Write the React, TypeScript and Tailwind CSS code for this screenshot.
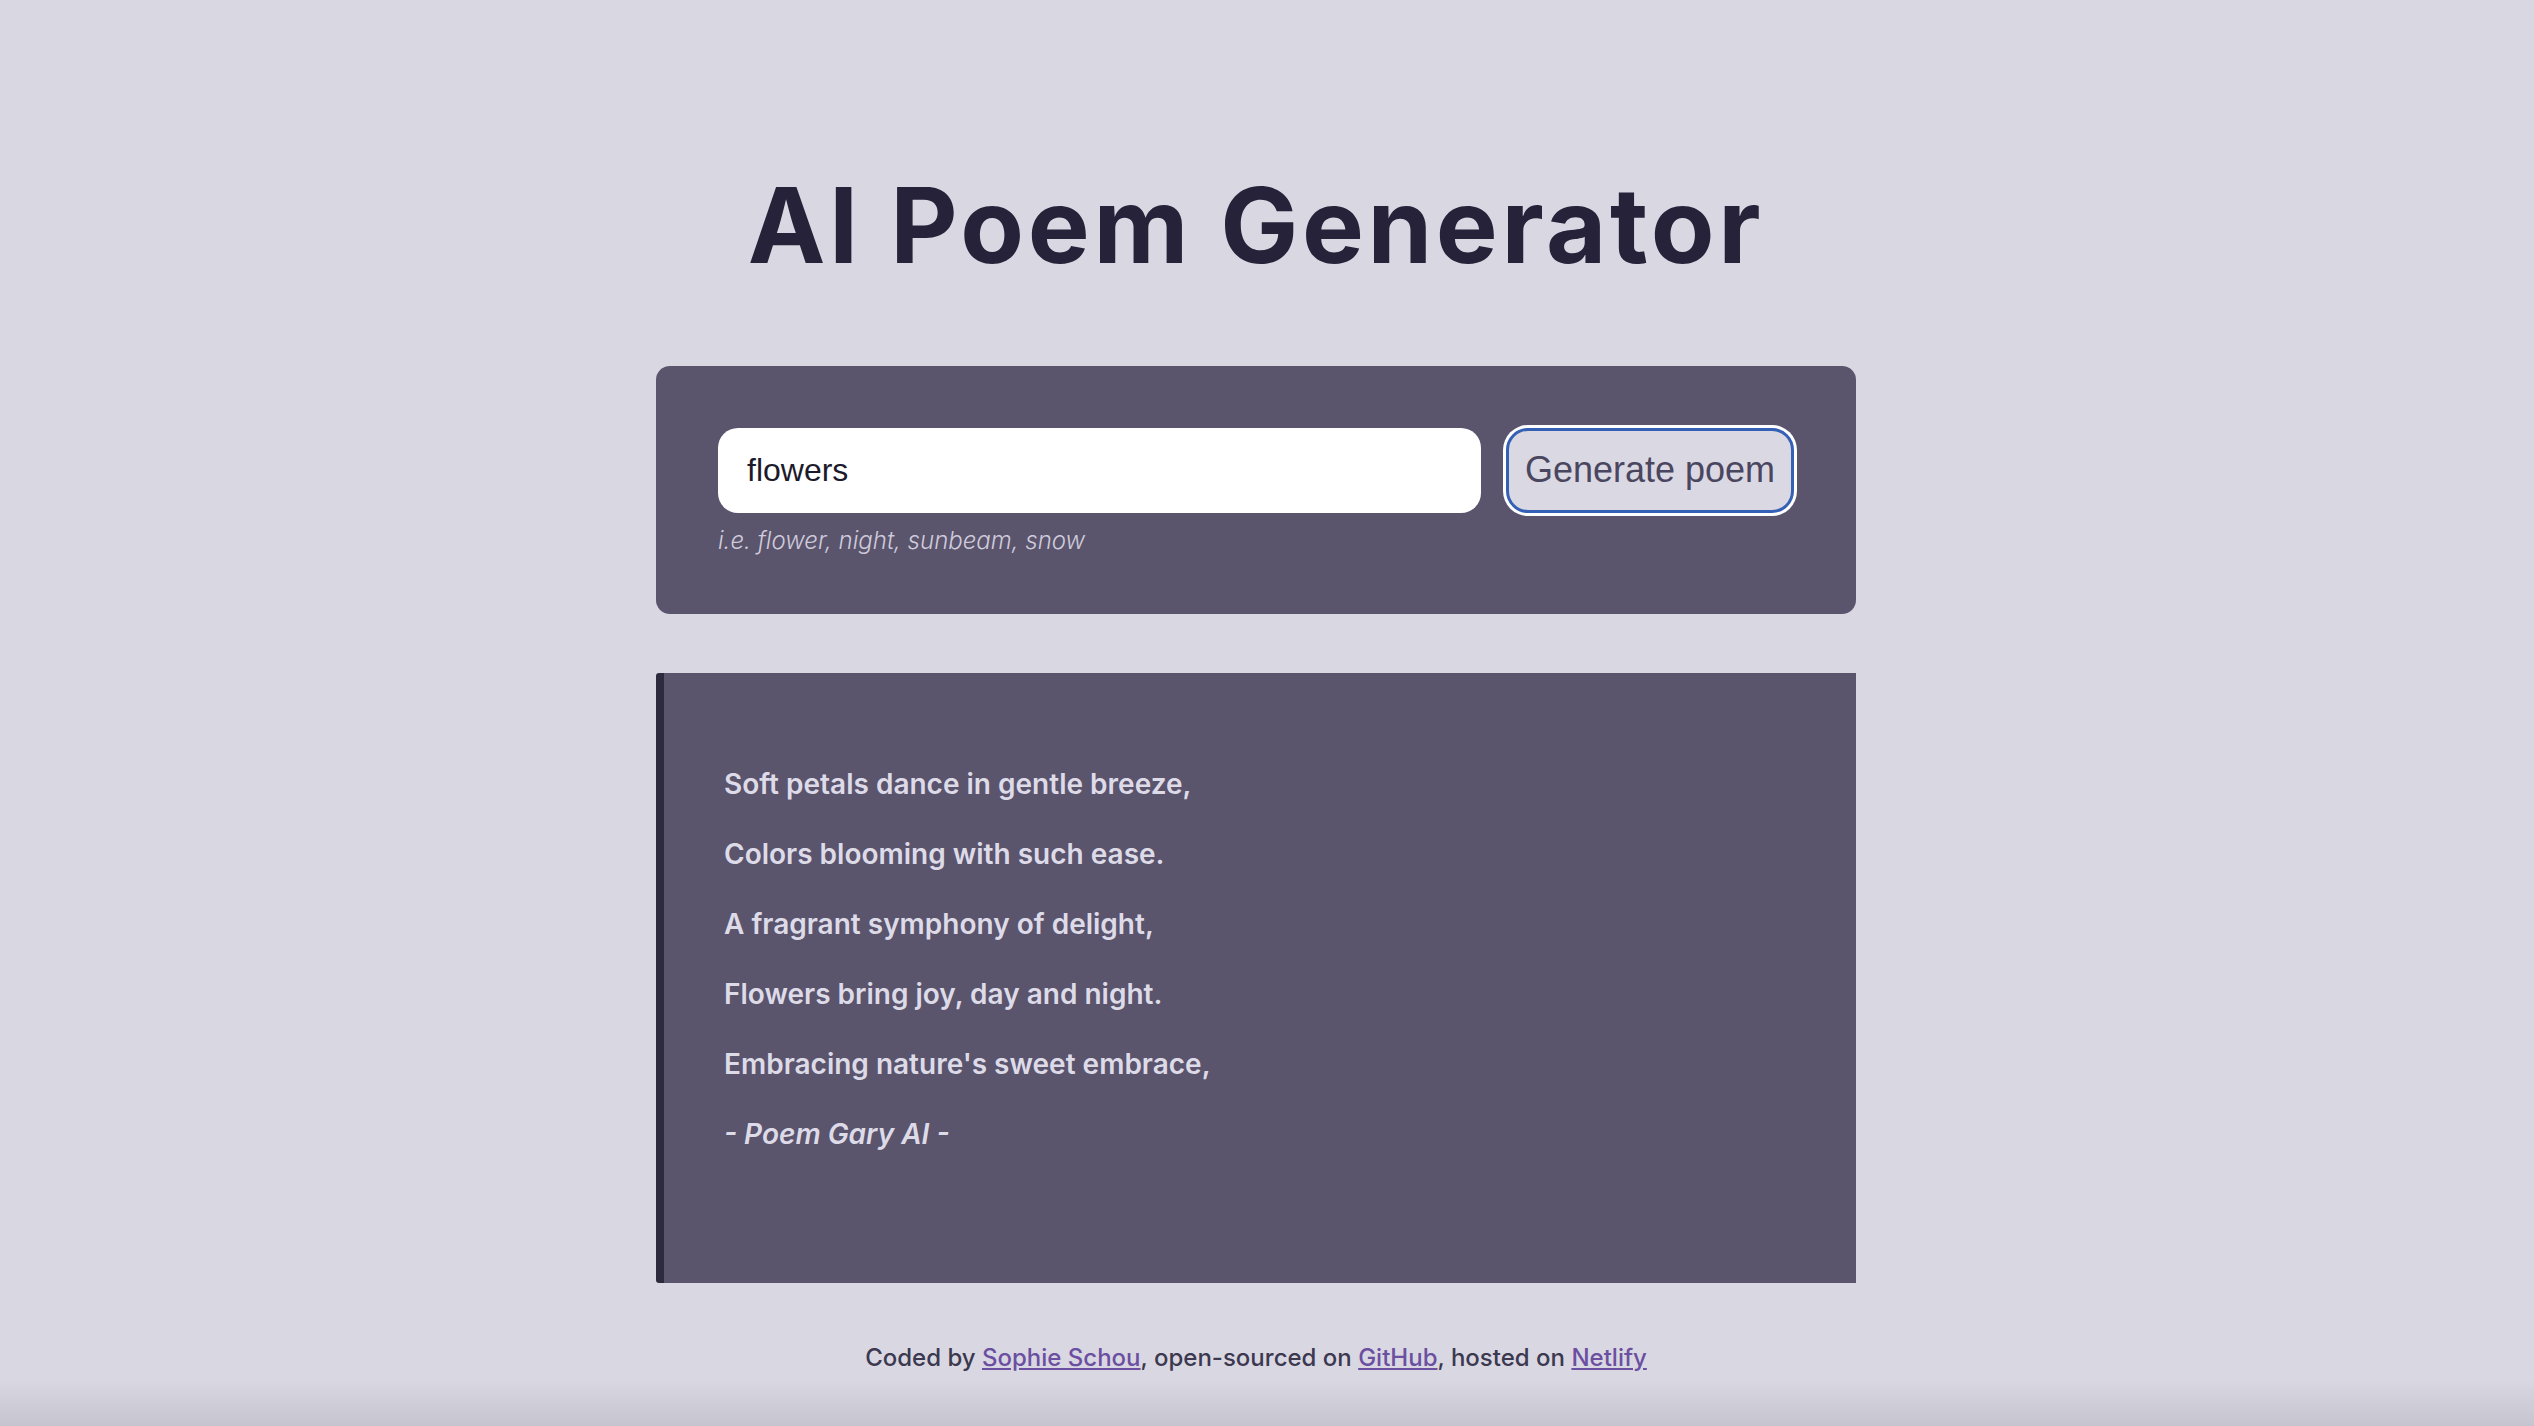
export default function App() {
  const lines = [
    "Soft petals dance in gentle breeze,",
    "Colors blooming with such ease.",
    "A fragrant symphony of delight,",
    "Flowers bring joy, day and night.",
    "Embracing nature's sweet embrace,",
  ];

  return (
    <div className="min-h-screen h-[1426px] bg-[#d9d7e2] flex flex-col pr-[22px] font-['Inter','Noto_Sans',sans-serif]">
      <div className="w-[1200px] mx-auto flex flex-col">
        {/* Title */}
        <h1 className="mt-[166px] text-center text-[104px] leading-[1.15] font-bold tracking-[0.035em] text-[#26223a]">
          AI Poem Generator
        </h1>

        {/* Form */}
        <div className="mt-[80px] bg-[#5a546d] rounded-[14px] p-[62px] pb-[55px]">
          <div className="flex items-center gap-[25px]">
            <input
              type="text"
              defaultValue="flowers"
              className="flex-1 h-[85px] bg-white rounded-[20px] px-[29px] text-[32px] text-[#1c1a2b] font-['Liberation_Sans',Arial,sans-serif] outline-none"
            />
            <button className="w-[288px] h-[85px] bg-[#dad8e3] rounded-[22px] border-[3px] border-[#3460b5] ring-[3px] ring-white text-[36px] text-[#4a4660] font-['Liberation_Sans',Arial,sans-serif]">
              Generate poem
            </button>
          </div>
          <p className="mt-[10px] text-[24px] leading-[1.5] italic font-light text-[#cfcbdb]">
            i.e. flower, night, sunbeam, snow
          </p>
        </div>

        {/* Poem */}
        <div className="mt-[59px] h-[610px] bg-[#5a546d] border-l-[8px] border-[#2d2a3e] rounded-l-[3px] pl-[60px] pt-[90px] flex flex-col gap-[28px] text-[28px] leading-[42px] font-semibold text-[#dedbe8]">
          {lines.map((l) => (
            <p key={l}>{l}</p>
          ))}
          <p className="italic">- Poem Gary AI -</p>
        </div>

        {/* Footer */}
        <p className="mt-[57px] text-center text-[24px] font-medium text-[#3b3850]">
          Coded by{" "}
          <a href="#" className="text-[#6b4fa0] underline">
            Sophie Schou
          </a>
          , open-sourced on{" "}
          <a href="#" className="text-[#6b4fa0] underline">
            GitHub
          </a>
          , hosted on{" "}
          <a href="#" className="text-[#6b4fa0] underline">
            Netlify
          </a>
        </p>
      </div>
      <div className="mt-auto h-[46px] -mr-[22px] bg-gradient-to-b from-[#d9d7e2] to-[#c6c4ce]" />
    </div>
  );
}
